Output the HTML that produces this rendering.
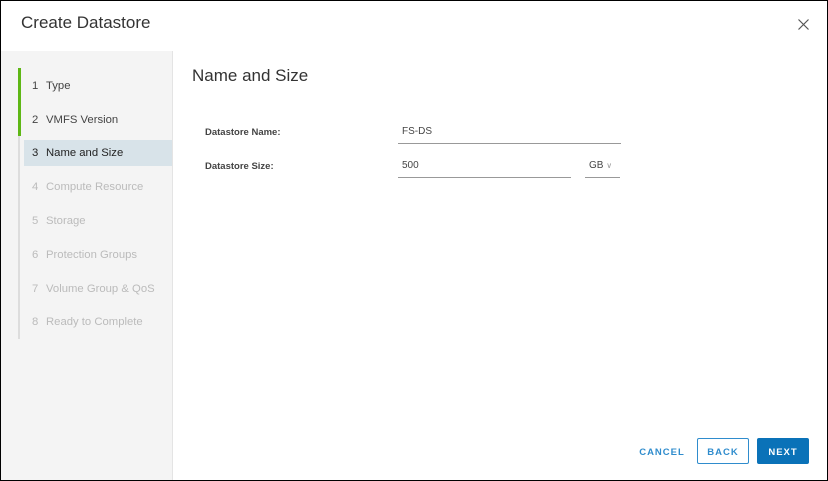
<!DOCTYPE html>
<html><head><style>
*{margin:0;padding:0;box-sizing:border-box}
body{width:828px;height:481px;overflow:hidden;background:#fff;font-family:"Liberation Sans",sans-serif;position:relative}
.frame{position:absolute;left:0;top:0;width:828px;height:481px;border:1px solid #000}
.title{position:absolute;left:21px;top:13px;font-size:17px;color:#333}
.side{position:absolute;left:1px;top:51px;width:172px;height:429px;background:#f4f4f4;border-right:1px solid #e4e4e4}
.track{position:absolute;left:18px;top:68px;width:2px;height:271px;background:#ddd}
.green{position:absolute;left:18px;top:68px;width:3px;height:68px;background:#5eb715}
.item{position:absolute;left:24px;width:148px;height:26px;line-height:27px;padding-left:8px;font-size:11.3px;color:#bbb}
.item.done{color:#444}
.item.sel{background:#d8e3e9;color:#222}
.item span{display:inline-block;width:14px}
h2{position:absolute;left:192px;top:66px;font-size:17px;font-weight:normal;color:#333}
.lbl{position:absolute;left:205px;font-size:9.5px;font-weight:bold;color:#444}
.inp{position:absolute;left:398px;height:18px;border-bottom:1px solid #999;font-size:10px;color:#444}
.btn{position:absolute;top:438px;height:26px;line-height:28px;font-size:9.5px;font-weight:bold;letter-spacing:1px;text-align:center;border-radius:2px}
</style></head><body>
<div class="frame"></div>
<div class="title">Create Datastore</div>
<svg style="position:absolute;left:798px;top:19px" width="11" height="11" viewBox="0 0 11 11"><path d="M0.5 0.5L10.5 10.5M10.5 0.5L0.5 10.5" stroke="#555" stroke-width="1.2"/></svg>
<div class="side"></div>
<div class="track"></div><div class="green"></div>
<div class="item done" style="top:73px"><span>1</span>Type</div>
<div class="item done" style="top:107px"><span>2</span>VMFS Version</div>
<div class="item sel" style="top:140px"><span>3</span>Name and Size</div>
<div class="item" style="top:174px"><span>4</span>Compute Resource</div>
<div class="item" style="top:208px"><span>5</span>Storage</div>
<div class="item" style="top:242px"><span>6</span>Protection Groups</div>
<div class="item" style="top:276px"><span>7</span>Volume Group &amp; QoS</div>
<div class="item" style="top:309px"><span>8</span>Ready to Complete</div>
<h2>Name and Size</h2>
<div class="lbl" style="top:127px">Datastore Name:</div>
<div class="lbl" style="top:161px">Datastore Size:</div>
<div class="inp" style="top:126px;width:223px;padding-left:4px">FS-DS</div>
<div class="inp" style="top:160px;width:173px;padding-left:4px">500</div>
<div class="inp" style="top:160px;left:585px;width:35px;padding-left:4px">GB <span style="color:#999;font-size:8px">∨</span></div>
<div class="btn" style="left:636px;width:52px;color:#2f8ccd;border:1px solid transparent">CANCEL</div>
<div class="btn" style="left:697px;width:52px;color:#2f8ccd;border:1px solid #2f8ccd">BACK</div>
<div class="btn" style="left:757px;width:52px;color:#fff;background:#0a72b8;border:1px solid #0a72b8">NEXT</div>
</body></html>
